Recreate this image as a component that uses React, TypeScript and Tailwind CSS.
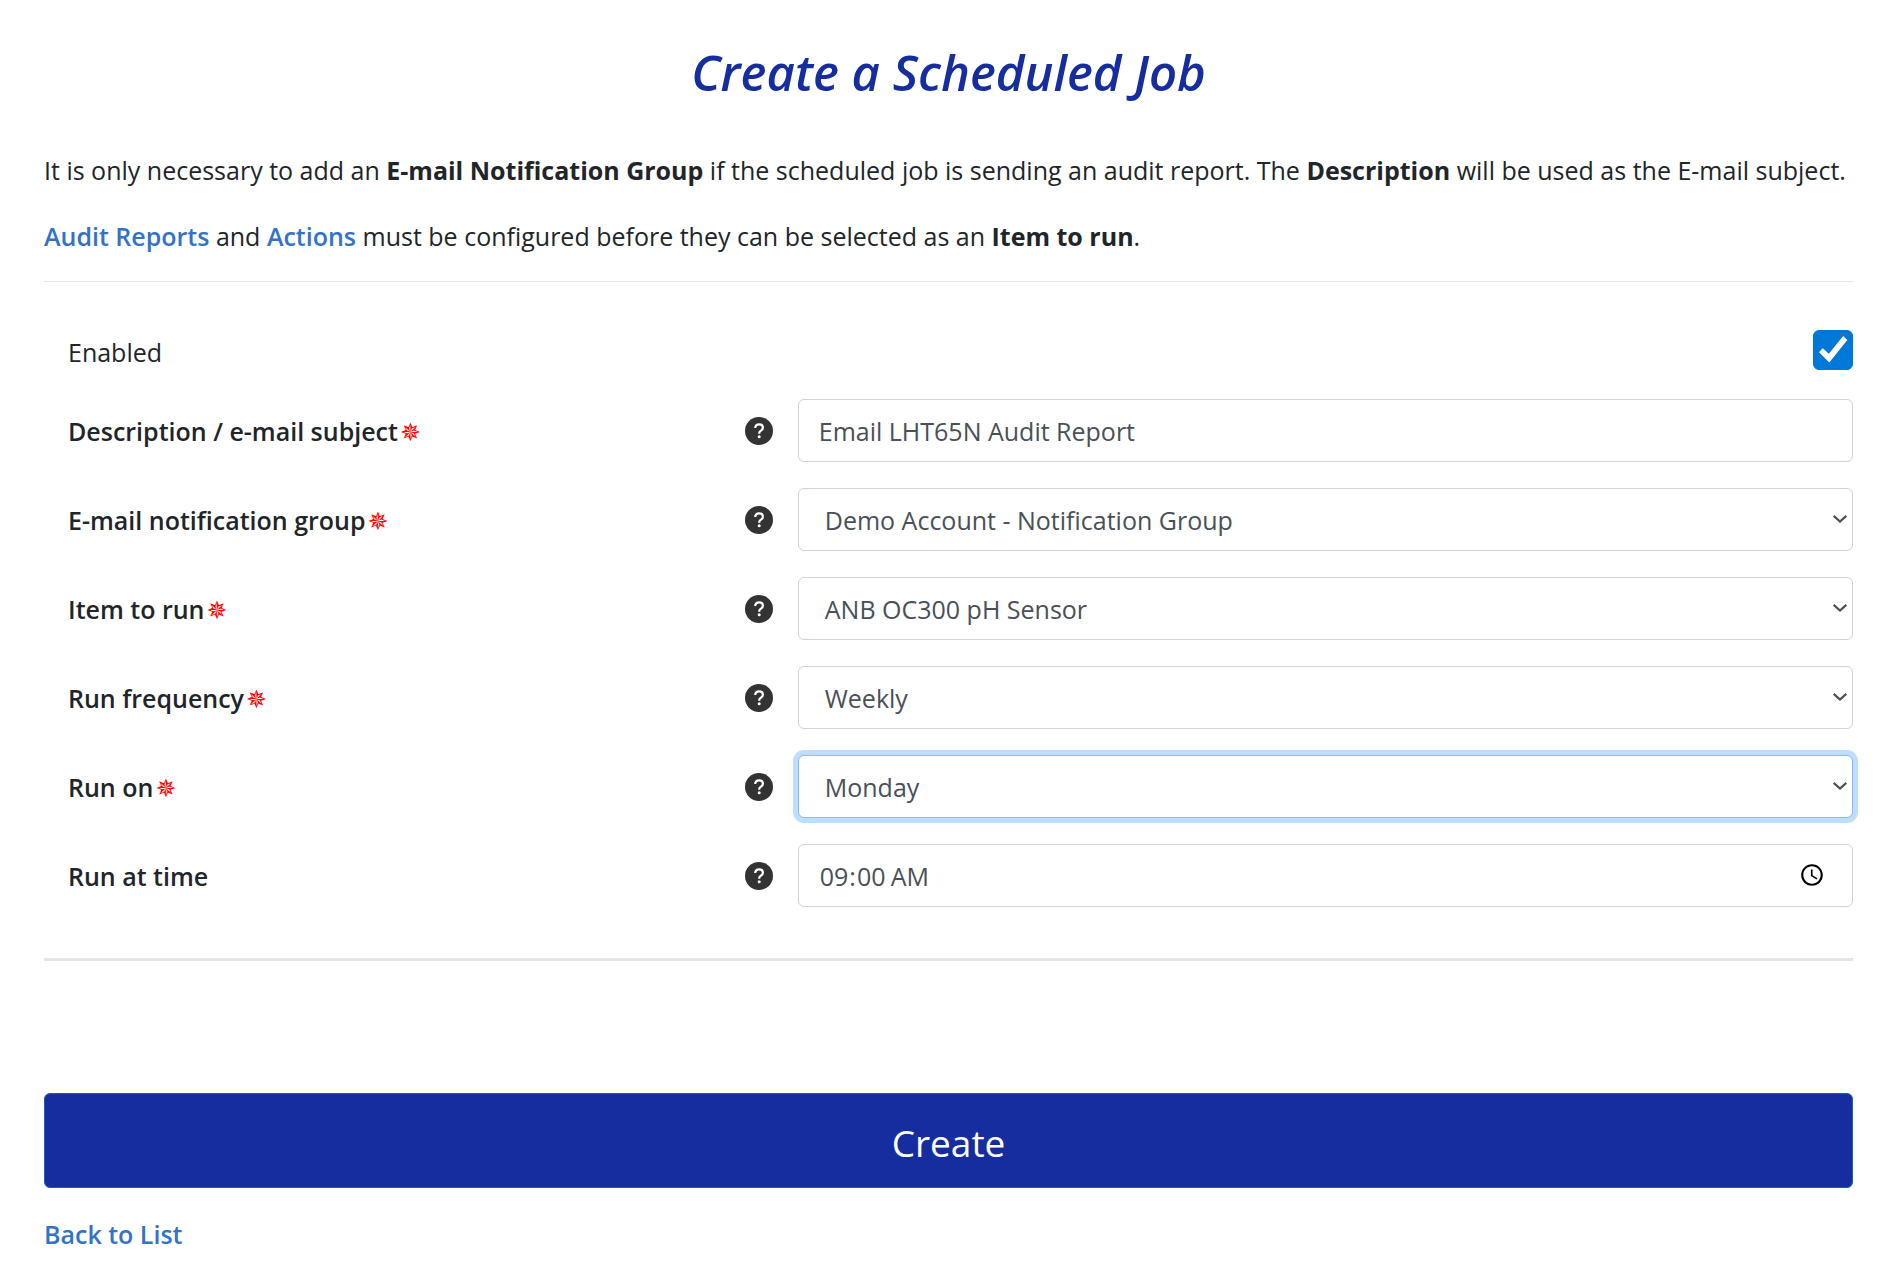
import React, { useState } from "react";

const FIELD =
	"h-[63px] w-full rounded-md border border-[#ced4da] bg-white text-[25px] leading-9 text-[#495057] outline-none focus:border-[#80bdff] focus:ring-[5px] focus:ring-[#bfdeff]";

function HelpIcon() {
	return (
		<svg viewBox="0 0 28 28" className="h-7 w-7" aria-hidden="true">
			<circle cx="14" cy="14" r="14" fill="#333" />
			<path
				d="M10.200 11c.1-2.300 1.600-3.700 3.900-3.700 2.300 0 3.800 1.300 3.800 3.200 0 1.400-.7 2.300-1.900 3.100-1.400.9-1.800 1.400-1.800 2.600v.5"
				fill="none"
				stroke="#fff"
				strokeWidth="2.200"
			/>
			<circle cx="14.200" cy="19.800" r="1.500" fill="#fff" />
		</svg>
	);
}

function Row({
	id,
	label,
	required,
	children,
}: {
	id: string;
	label: string;
	required?: boolean;
	children: React.ReactNode;
}) {
	return (
		<div className="grid grid-cols-12 items-center">
			<div className="col-span-5 flex items-center justify-between pr-[25px] pl-6">
				<label htmlFor={id} className="font-semibold">
					{label}
					{required && (
						<span className="ml-0.5 font-['DejaVu_Sans'] text-[25px] leading-none font-normal text-[#ff0000]">
							✵
						</span>
					)}
				</label>
				<button type="button" aria-label={`Help: ${label}`}>
					<HelpIcon />
				</button>
			</div>
			<div className="col-span-7">{children}</div>
		</div>
	);
}

function SelectField({
	id,
	options,
	autoFocus,
}: {
	id: string;
	options: string[];
	autoFocus?: boolean;
}) {
	const [value, setValue] = useState(options[0]);

	return (
		<div className="relative">
			<select
				id={id}
				value={value}
				autoFocus={autoFocus}
				onChange={(e) => setValue(e.target.value)}
				className={`${FIELD} appearance-none pr-10 pl-[26px]`}
			>
				{options.map((o) => (
					<option key={o}>{o}</option>
				))}
			</select>
			<svg
				viewBox="0 0 14 8"
				className="pointer-events-none absolute top-[27px] right-[6px] h-2 w-[14px]"
				aria-hidden="true"
			>
				<path
					d="M.7 .9 7 6.500 13.300 .9"
					fill="none"
					stroke="#495057"
					strokeWidth="2.200"
				/>
			</svg>
		</div>
	);
}

export default function App() {
	const [enabled, setEnabled] = useState(true);
	const [description, setDescription] = useState(
		"Email LHT65N Audit Report"
	);
	const [time, setTime] = useState("09:00");

	return (
		<main className="bg-white pt-[38px] pr-[37px] pb-5 pl-11 font-['Open_Sans','Noto_Sans',sans-serif] text-[25px] leading-9 text-[#212529]">
			<h1 className="text-center text-[49px] leading-[68px] font-semibold text-[#162da0] italic">
				Create a Scheduled Job
			</h1>

			<p className="mt-[46px]">
				It is only necessary to add an <b>E-mail Notification Group</b>{" "}
				if the scheduled job is sending an audit report. The{" "}
				<b>Description</b> will be used as the E-mail subject.
			</p>
			<p className="mt-[30px]">
				<a href="#audit-reports" className="font-semibold text-[#3273c8]">
					Audit Reports
				</a>{" "}
				and{" "}
				<a href="#actions" className="font-semibold text-[#3273c8]">
					Actions
				</a>{" "}
				must be configured before they can be selected as an{" "}
				<b>Item to run</b>.
			</p>

			<hr className="mt-[27px] border-[#e5e5e5]" />

			<form onSubmit={(e) => e.preventDefault()}>
				<div className="mt-12 flex items-end justify-between pl-6">
					<label htmlFor="enabled">Enabled</label>
					<div className="relative h-10 w-10">
						<input
							id="enabled"
							type="checkbox"
							checked={enabled}
							onChange={(e) => setEnabled(e.target.checked)}
							className="peer block h-10 w-10 appearance-none rounded-md border border-[#767676] checked:border-[#0078d7] checked:bg-[#0078d7]"
						/>
						<svg
							viewBox="0 0 40 40"
							className="pointer-events-none absolute inset-0 hidden h-10 w-10 peer-checked:block"
							aria-hidden="true"
						>
							<path
								d="M6 22.300 9.800 18.200 15.800 23.800 30.200 6 34.300 10 16.300 32.500Z"
								fill="#fff"
							/>
						</svg>
					</div>
				</div>

				<div className="mt-[29px] flex flex-col gap-[26px]">
					<Row
						id="description"
						label="Description / e-mail subject"
						required
					>
						<input
							id="description"
							type="text"
							value={description}
							onChange={(e) => setDescription(e.target.value)}
							className={`${FIELD} px-5`}
						/>
					</Row>
					<Row id="group" label="E-mail notification group" required>
						<SelectField
							id="group"
							options={["Demo Account - Notification Group"]}
						/>
					</Row>
					<Row id="item" label="Item to run" required>
						<SelectField
							id="item"
							options={["ANB OC300 pH Sensor"]}
						/>
					</Row>
					<Row id="frequency" label="Run frequency" required>
						<SelectField
							id="frequency"
							options={["Weekly", "Daily", "Monthly"]}
						/>
					</Row>
					<Row id="day" label="Run on" required>
						<SelectField
							id="day"
							autoFocus
							options={[
								"Monday",
								"Tuesday",
								"Wednesday",
								"Thursday",
								"Friday",
								"Saturday",
								"Sunday",
							]}
						/>
					</Row>
					<Row id="time" label="Run at time">
						<input
							id="time"
							type="time"
							value={time}
							onChange={(e) => setTime(e.target.value)}
							className={`${FIELD} pr-6 pl-5`}
						/>
					</Row>
				</div>

				<hr className="mt-[51px] border-t-[3px] border-[#e5e5e5]" />

				<button
					type="submit"
					className="mt-[132px] h-[95px] w-full rounded-md border border-[#1861ac] bg-[#162da0] pt-1 text-[37px] text-white"
				>
					Create
				</button>
			</form>

			<a
				href="#list"
				className="mt-7 inline-block font-semibold text-[#3273c8]"
			>
				Back to List
			</a>
		</main>
	);
}
